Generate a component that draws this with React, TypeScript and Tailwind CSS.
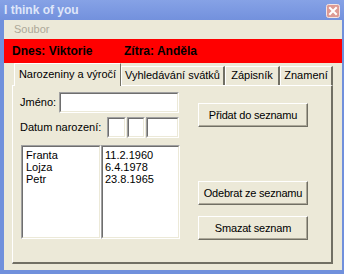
import React from 'react';

const font = { fontFamily: '"Liberation Sans", Arial, sans-serif' };

function Sunken({ className = '', children }: { className?: string; children?: React.ReactNode }) {
    return (
        <div className={`border-t border-l border-[#a0a0a0] border-b border-r border-b-white border-r-white ${className}`}>
            <div className="h-full w-full bg-white border-t border-l border-[#6e6e6e] border-b border-r border-b-[#ece9d8] border-r-[#ece9d8]">
                {children}
            </div>
        </div>
    );
}

function Button({ label, className = '' }: { label: string; className?: string }) {
    return (
        <button className={`w-[110px] h-[24px] bg-[#ece9d8] border border-t-white border-l-white border-b-[#716f64] border-r-[#716f64] shadow-[inset_-1px_-1px_0_#aca899] text-[11px] tracking-[-0.2px] text-black flex items-center justify-center whitespace-nowrap ${className}`}>
            {label}
        </button>
    );
}

function Tab({ label, active, className = '' }: { label: string; active?: boolean; className?: string }) {
    if (active) {
        return (
            <div className={`h-[23px] flex items-start justify-center pt-[4px] bg-[#ece9d8] border-t border-l border-white border-r border-r-[#716f64] relative z-10 whitespace-nowrap ${className}`}>
                <span className="text-[11px] leading-[13px]">{label}</span>
            </div>
        );
    }
    return (
        <div className={`h-[19px] mt-[3px] flex items-start justify-center pt-[2px] border-t border-l border-white border-r-2 border-r-[#716f64] whitespace-nowrap ${className}`}>
            <span className="text-[11px] leading-[13px]">{label}</span>
        </div>
    );
}

export default function App() {
    return (
        <div className="w-[344px] h-[274px] bg-[#7090dc] flex flex-col text-black select-none" style={font}>
            {/* title bar */}
            <div className="h-[20px] flex items-center justify-between pl-[4px] pr-[4px] bg-gradient-to-b from-[#86a2e6] to-[#7391dd]">
                <span className="text-[12px] font-bold text-[#dfe6f9] leading-none">I think of you</span>
                <svg width="14" height="14" viewBox="0 0 14 14" className="mt-[1px]">
                    <rect x="0.5" y="0.5" width="13" height="13" rx="2" fill="#dd9a94" stroke="#f4e4e2" />
                    <path d="M4 4 L10 10 M10 4 L4 10" stroke="#ffffff" strokeWidth="2" strokeLinecap="square" />
                </svg>
            </div>

            <div className="flex-1 ml-[4px] mr-[2px] mb-[4px] bg-[#ece9d8] flex flex-col">
                {/* menu */}
                <div className="h-[19px] flex items-center pl-[10px]">
                    <span className="text-[11px] text-[#aca899]">Soubor</span>
                </div>

                {/* red bar */}
                <div className="h-[24px] bg-[#ff0000] flex items-center pl-[8px] text-[12px] font-bold">
                    <span className="w-[112px]">Dnes: Viktorie</span>
                    <span>Zítra: Anděla</span>
                </div>

                {/* tabs */}
                <div className="ml-[8px] mr-[9px] flex flex-col flex-1 mb-[6px]">
                    <div className="flex h-[22px]">
                        <Tab label="Narozeniny a výročí" active className="w-[107px] ml-[2px]" />
                        <Tab label="Vyhledávání svátků" className="w-[104px]" />
                        <Tab label="Zápisník" className="w-[55px]" />
                        <Tab label="Znamení" className="w-[53px]" />
                    </div>
                    <div className="flex-1 flex border-t border-l border-white border-r-2 border-b-2 border-r-[#716f64] border-b-[#716f64]">
                        <div className="flex flex-col pl-[7px] pt-[6px] w-[167px]">
                            <div className="flex items-center h-[21px]">
                                <span className="w-[39px] text-[11px]">Jméno:</span>
                                <Sunken className="w-[120px] h-[21px]" />
                            </div>
                            <div className="flex items-center h-[21px] mt-[4px]">
                                <span className="w-[87px] text-[11px]">Datum narození:</span>
                                <Sunken className="w-[19px] h-[21px]" />
                                <Sunken className="w-[18px] h-[21px] ml-[1px]" />
                                <Sunken className="w-[33px] h-[21px] ml-[1px]" />
                            </div>
                            <div className="flex mt-[7px] ml-[1px] h-[94px]">
                                <Sunken className="w-[80px] h-full">
                                    <div className="pl-[3px] pt-[2px] text-[11px] leading-[12px] flex flex-col">
                                        <span>Franta</span>
                                        <span>Lojza</span>
                                        <span>Petr</span>
                                    </div>
                                </Sunken>
                                <Sunken className="w-[79px] h-full">
                                    <div className="pl-[2px] pt-[2px] text-[11px] leading-[12px] flex flex-col">
                                        <span>11.2.1960</span>
                                        <span>6.4.1978</span>
                                        <span>23.8.1965</span>
                                    </div>
                                </Sunken>
                            </div>
                        </div>
                        <div className="flex flex-col ml-[18px] pt-[17px]">
                            <Button label="Přidat do seznamu" />
                            <Button label="Odebrat ze seznamu" className="mt-[54px]" />
                            <Button label="Smazat seznam" className="mt-[11px]" />
                        </div>
                    </div>
                </div>
            </div>
        </div>
    );
}
